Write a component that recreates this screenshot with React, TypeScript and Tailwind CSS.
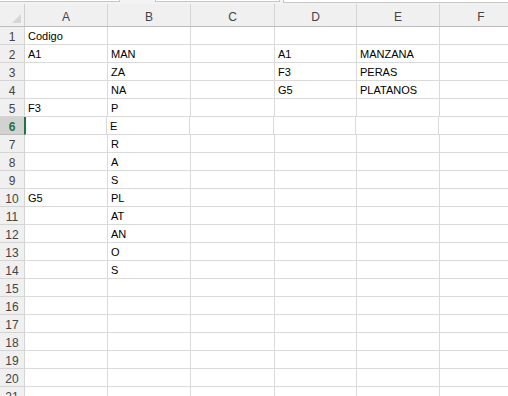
import React from "react";

const cols = [
  { l: "A", w: "w-[83px]" },
  { l: "B", w: "w-[83px]" },
  { l: "C", w: "w-[84px]" },
  { l: "D", w: "w-[82px]" },
  { l: "E", w: "w-[83px]" },
  { l: "F", w: "w-[83px]" },
];

const data: Record<number, string[]> = {
  1: ["Codigo", "", "", "", "", ""],
  2: ["A1", "MAN", "", "A1", "MANZANA", ""],
  3: ["", "ZA", "", "F3", "PERAS", ""],
  4: ["", "NA", "", "G5", "PLATANOS", ""],
  5: ["F3", "P", "", "", "", ""],
  6: ["", "E", "", "", "", ""],
  7: ["", "R", "", "", "", ""],
  8: ["", "A", "", "", "", ""],
  9: ["", "S", "", "", "", ""],
  10: ["G5", "PL", "", "", "", ""],
  11: ["", "AT", "", "", "", ""],
  12: ["", "AN", "", "", "", ""],
  13: ["", "O", "", "", "", ""],
  14: ["", "S", "", "", "", ""],
};

export default function App() {
  const rows = Array.from({ length: 21 }, (_, i) => i + 1);
  return (
    <div
      className="w-[508px] h-[396px] overflow-hidden bg-white text-[11px] text-black"
      style={{ fontFamily: '"Liberation Sans", Arial, sans-serif' }}
    >
      {/* top strip */}
      <div className="h-[4px] bg-[#f3f3f3] flex">
        <div className="w-[120px] h-[2px] bg-white border-b border-r border-[#c6c6c6]" />
        <div className="w-[35px]" />
        <div className="w-[125px] h-[2px] bg-white border-b border-x border-[#c6c6c6]" />
        <div className="w-[3px]" />
        <div className="flex-1 h-[3px] bg-white border-b border-l border-[#c6c6c6]" />
      </div>
      {/* header */}
      <div className="flex h-[23px] bg-[#f0f0f0] border-b border-[#bdbdbd] text-[#444]">
        <div className="w-[25px] shrink-0 border-r border-[#d0d0d0] relative">
          <svg className="absolute right-[3px] bottom-[3px]" width="9" height="9" viewBox="0 0 9 9">
            <polygon points="9,0 9,9 0,9" fill="#d6d6d6" />
          </svg>
        </div>
        {cols.map((c) => (
          <div
            key={c.l}
            className={`${c.w} shrink-0 border-r border-[#d4d4d4] flex items-center justify-center pt-[3px] text-[12px]`}
          >
            {c.l}
          </div>
        ))}
      </div>
      {rows.map((r) => {
        const sel = r === 6;
        return (
          <div key={r} className="flex h-[18px]">
            <div
              className={
                sel
                  ? "w-[25px] shrink-0 bg-[#d2d2d2] border-r border-b border-[#bdbdbd] flex items-center justify-center pt-[2px] text-[12px] text-[#217346] font-bold"
                  : "w-[25px] shrink-0 bg-[#f0f0f0] border-r border-b border-[#d4d4d4] flex items-center justify-center pt-[2px] text-[12px] text-[#444]"
              }
            >
              {r}
            </div>
            {cols.map((c, ci) => (
              <div
                key={c.l}
                className={`${c.w} shrink-0 border-r border-b border-[#dadada] flex items-center pl-[3px] pt-[2px] whitespace-nowrap overflow-hidden ${
                  sel && ci === 0 ? "border-l-2 border-l-[#217346] pl-[1px] -ml-[1px]" : ""
                }`}
              >
                {(data[r] || [])[ci] || ""}
              </div>
            ))}
          </div>
        );
      })}
    </div>
  );
}
